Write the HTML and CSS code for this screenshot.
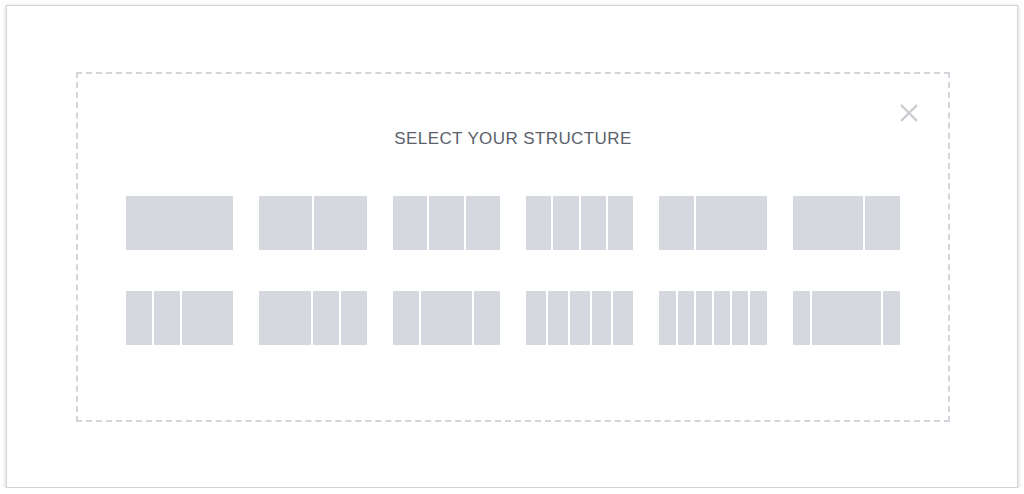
FILE: index.html
```html
<!DOCTYPE html>
<html>
<head>
<meta charset="utf-8">
<link rel="stylesheet" href="styles.css">
</head>
<body>
<div class="frame">
  <div class="dropzone">
    <button class="close" aria-label="Close">
      <svg width="20" height="20" viewBox="0 0 20 20"><path d="M2 2 L18 18 M18 2 L2 18" stroke="#c9ccd1" stroke-width="2.4" fill="none"/></svg>
    </button>
    <h2 class="title">SELECT YOUR STRUCTURE</h2>
    <div class="grid">
      <div class="struct"><i style="flex:1"></i></div>
      <div class="struct"><i style="flex:1"></i><i style="flex:1"></i></div>
      <div class="struct"><i style="flex:1"></i><i style="flex:1"></i><i style="flex:1"></i></div>
      <div class="struct"><i style="flex:1"></i><i style="flex:1"></i><i style="flex:1"></i><i style="flex:1"></i></div>
      <div class="struct"><i style="flex:1"></i><i style="flex:2"></i></div>
      <div class="struct"><i style="flex:2"></i><i style="flex:1"></i></div>

      <div class="struct"><i style="flex:1"></i><i style="flex:1"></i><i style="flex:2"></i></div>
      <div class="struct"><i style="flex:2"></i><i style="flex:1"></i><i style="flex:1"></i></div>
      <div class="struct"><i style="flex:1"></i><i style="flex:2"></i><i style="flex:1"></i></div>
      <div class="struct"><i style="flex:1"></i><i style="flex:1"></i><i style="flex:1"></i><i style="flex:1"></i><i style="flex:1"></i></div>
      <div class="struct"><i style="flex:1"></i><i style="flex:1"></i><i style="flex:1"></i><i style="flex:1"></i><i style="flex:1"></i><i style="flex:1"></i></div>
      <div class="struct"><i style="flex:1"></i><i style="flex:4"></i><i style="flex:1"></i></div>
    </div>
  </div>
</div>
</body>
</html>
```

FILE: styles.css
```css
html, body {
  margin: 0;
  padding: 0;
  background: #ffffff;
}
body {
  font-family: "Liberation Sans", Arial, sans-serif;
}
.frame {
  box-sizing: border-box;
  margin: 5px 0 0 6px;
  width: 1012px;
  height: 483px;
  border: 1px solid #d4d4d4;
  box-shadow: 0 1px 4px rgba(0,0,0,0.22);
  background: #fff;
  padding: 66px 0 0 69px;
}
.dropzone {
  position: relative;
  box-sizing: border-box;
  width: 874px;
  height: 350px;
  border: 2px dashed #d2d5da;
  padding: 55px 48px 0 48px;
}
.close {
  position: absolute;
  top: 29px;
  right: 29px;
  width: 20px;
  height: 20px;
  padding: 0;
  border: 0;
  background: none;
  display: block;
}
.close svg { display: block; }
.title {
  margin: 0;
  text-align: center;
  font-size: 17px;
  line-height: 19px;
  letter-spacing: 0.4px;
  font-weight: normal;
  color: #5b626c;
}
.grid {
  margin-top: 48px;
  display: grid;
  grid-template-columns: repeat(6, 1fr);
  column-gap: 26px;
  row-gap: 41px;
}
.struct {
  display: flex;
  gap: 2px;
  height: 54px;
}
.struct i {
  display: block;
  background: #d5d8de;
}
```
